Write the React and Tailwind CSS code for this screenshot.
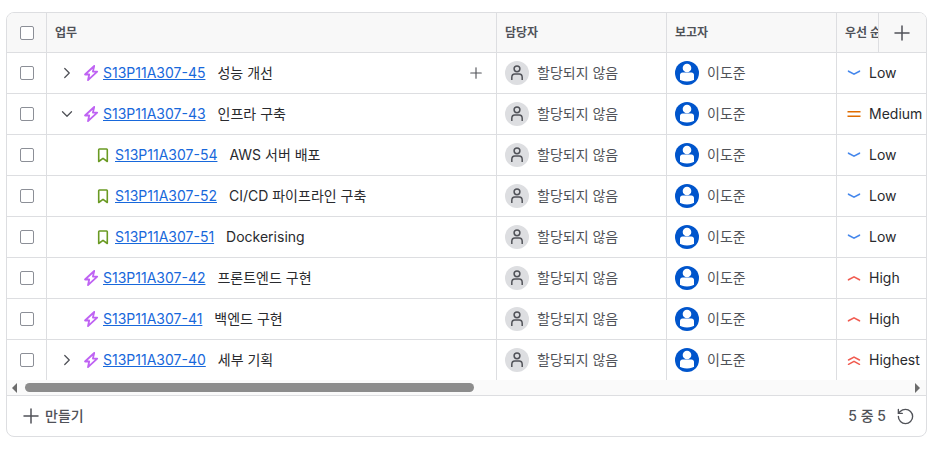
import { Plus, ChevronRight, ChevronDown, RotateCcw } from 'lucide-react';

const rows = [
  { key: 'S13P11A307-45', title: '성능 개선', priority: 'Low', expand: 'closed', hover: true },
  { key: 'S13P11A307-43', title: '인프라 구축', priority: 'Medium', expand: 'open' },
  { key: 'S13P11A307-54', title: 'AWS 서버 배포', priority: 'Low', child: true },
  { key: 'S13P11A307-52', title: 'CI/CD 파이프라인 구축', priority: 'Low', child: true },
  { key: 'S13P11A307-51', title: 'Dockerising', priority: 'Low', child: true },
  { key: 'S13P11A307-42', title: '프론트엔드 구현', priority: 'High' },
  { key: 'S13P11A307-41', title: '백엔드 구현', priority: 'High' },
  { key: 'S13P11A307-40', title: '세부 기획', priority: 'Highest', expand: 'closed' },
];

const Checkbox = () => (
  <span className="block w-[14px] h-[14px] rounded-[2px] border border-[#8c8f97] bg-white"></span>
);

const EpicIcon = () => (
  <svg width="16" height="16" viewBox="0 0 16 16" fill="none" className="shrink-0 overflow-visible">
    <path d="M11.200 1 2 9.500h4.200L5 15.200l9.200-8.600H9.900L11.200 1Z" stroke="#bf63f3" strokeWidth="1.800" strokeLinejoin="round" />
  </svg>
);

const StoryIcon = () => (
  <svg width="12" height="15" viewBox="0 0 12 15" fill="none" className="shrink-0">
    <path d="M1.700 1.700c0-.4.300-.7.700-.7h7.200c.4 0 .7.300.7.700v11.800L6 10.300l-4.300 3.200V1.700Z" stroke="#6a9a23" strokeWidth="1.600" strokeLinejoin="round" />
  </svg>
);

const PriorityIcon = ({ level }) => {
  if (level === 'Medium') {
    return (
      <svg width="14" height="10" viewBox="0 0 14 10" fill="none" className="shrink-0">
        <path d="M0.500 2.800h13M0.500 7.200h13" stroke="#e06c00" strokeWidth="1.500" />
      </svg>
    );
  }
  if (level === 'Low') {
    return (
      <svg width="14" height="10" viewBox="0 0 14 10" fill="none" className="shrink-0">
        <path d="m1.500 3.200 5.500 3 5.500-3" stroke="#4688ec" strokeWidth="1.600" strokeLinecap="round" />
      </svg>
    );
  }
  if (level === 'High') {
    return (
      <svg width="14" height="10" viewBox="0 0 14 10" fill="none" className="shrink-0">
        <path d="m1.500 6.800 5.500-3 5.500 3" stroke="#f15b50" strokeWidth="1.600" strokeLinecap="round" />
      </svg>
    );
  }
  return (
    <svg width="14" height="12" viewBox="0 0 14 12" fill="none" className="shrink-0">
      <path d="m1.500 6 5.500-3 5.500 3M1.500 10.300 7 7.300l5.500 3" stroke="#f15b50" strokeWidth="1.500" strokeLinecap="round" />
    </svg>
  );
};

const UnassignedAvatar = () => (
  <span className="flex items-center justify-center w-6 h-6 rounded-full bg-[#dddee1] shrink-0">
    <svg width="16" height="16" viewBox="0 0 16 16" fill="none">
      <circle cx="8" cy="3.800" r="2.900" stroke="#505258" strokeWidth="1.500" />
      <path d="M2.800 15v-2.500c0-2 1.300-3.500 3-3.500h4.400c1.700 0 3 1.500 3 3.500V15" stroke="#505258" strokeWidth="1.500" />
    </svg>
  </span>
);

const ReporterAvatar = () => (
  <svg width="24" height="24" viewBox="0 0 24 24" className="shrink-0">
    <circle cx="12" cy="12" r="12" fill="#0055cc" />
    <circle cx="12" cy="7" r="4.300" fill="#fff" />
    <path d="M5 14c0-1.400 1.100-2.500 2.500-2.500h9c1.400 0 2.500 1.100 2.500 2.500v4.300c-1 1.300-3 2.200-7 2.200s-6-.9-7-2.200V14Z" fill="#fff" />
  </svg>
);

const HeaderCell = ({ children, last }) => (
  <div className={`flex items-center px-2 h-[39px] text-xs font-semibold text-[#505258] whitespace-nowrap overflow-hidden ${last ? '' : 'border-r border-[#dddee1]'}`}>
    {children}
  </div>
);

const Row = ({ row }) => (
  <div className="grid grid-cols-[40px_450px_170px_170px_90px] h-[41px] border-t border-[#dddee1] text-sm text-[#292a2e]">
    <div className="flex items-center justify-center border-r border-[#dddee1]">
      <Checkbox />
    </div>
    <div className={`flex items-center border-r border-[#dddee1] pr-3 ${row.child ? 'pl-[50px]' : 'pl-[10px]'}`}>
      {!row.child && (
        <span className="flex items-center justify-center w-5 h-5 mr-[6px] text-[#505258]">
          {row.expand === 'closed' && <ChevronRight size={18} strokeWidth={1.7} />}
          {row.expand === 'open' && <ChevronDown size={18} strokeWidth={1.7} />}
        </span>
      )}
      {row.child ? <StoryIcon /> : <EpicIcon />}
      <a href="#" className={`text-[#1868db] underline whitespace-nowrap ${row.child ? 'ml-[6px]' : 'ml-1'}`}>{row.key}</a>
      <span className="ml-3 whitespace-nowrap">{row.title}</span>
      {row.hover && <Plus size={18} strokeWidth={1.5} className="ml-auto -mr-px text-[#505258]" />}
    </div>
    <div className="flex items-center gap-2 px-2 border-r border-[#dddee1]">
      <UnassignedAvatar />
      <span className="whitespace-nowrap text-[#505258]">할당되지 않음</span>
    </div>
    <div className="flex items-center gap-2 px-2 border-r border-[#dddee1]">
      <ReporterAvatar />
      <span className="whitespace-nowrap text-[#505258]">이도준</span>
    </div>
    <div className="flex items-center pl-[10px] overflow-hidden">
      <span className="flex justify-center w-[14px] mr-[8px]">
        <PriorityIcon level={row.priority} />
      </span>
      <span className="whitespace-nowrap">{row.priority}</span>
    </div>
  </div>
);

export default function App() {
  return (
    <div className="bg-white w-[946px] h-[451px] pt-3 pl-[6px] font-['Inter','Noto_Sans_CJK_KR',sans-serif]">
      <div className="relative w-[921px] h-[425px] border border-[#dddee1] rounded-lg overflow-hidden">
        {/* Header */}
        <div className="grid grid-cols-[40px_450px_170px_170px_90px] h-[39px] bg-[#f8f8f8]">
          <div className="flex items-center justify-center border-r border-[#dddee1]">
            <Checkbox />
          </div>
          <HeaderCell>업무</HeaderCell>
          <HeaderCell>담당자</HeaderCell>
          <HeaderCell>보고자</HeaderCell>
          <HeaderCell last>우선 순위</HeaderCell>
        </div>
        <div className="absolute top-0 right-0 flex items-center justify-center w-12 h-[39px] pr-px bg-[#f8f8f8] border-l border-[#dddee1] text-[#505258]">
          <Plus size={24} strokeWidth={1.5} />
        </div>

        {/* Rows */}
        {rows.map((row) => (
          <Row key={row.key} row={row} />
        ))}

        {/* Scrollbar */}
        <div className="flex items-center h-[15px] bg-[#fafafa]">
          <span className="w-0 h-0 ml-[5px] border-y-[5px] border-y-transparent border-r-[5px] border-r-[#6b6b6b]"></span>
          <span className="block w-[449px] h-[9px] ml-2 rounded-full bg-[#8c8c8c]"></span>
          <span className="w-0 h-0 ml-auto mr-[6px] border-y-[5px] border-y-transparent border-l-[5px] border-l-[#6b6b6b]"></span>
        </div>

        {/* Footer */}
        <div className="flex items-center justify-between h-[41px] pl-3 pr-[11px] border-t border-[#dddee1] text-sm font-medium text-[#505258]">
          <div className="flex items-center gap-[2px]">
            <Plus size={24} strokeWidth={1.5} />
            <span>만들기</span>
          </div>
          <div className="flex items-center gap-[10px]">
            <span>5 중 5</span>
            <RotateCcw size={19} strokeWidth={1.7} />
          </div>
        </div>
      </div>
    </div>
  );
}
